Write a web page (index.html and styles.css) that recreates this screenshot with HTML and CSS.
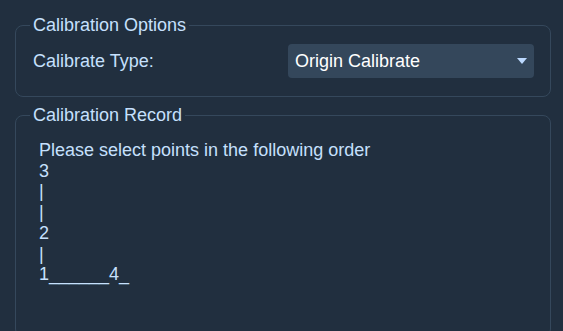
FILE: index.html
```html
<!DOCTYPE html>
<html>
<head>
<meta charset="utf-8">
<link rel="stylesheet" href="styles.css">
</head>
<body>
<div class="page">
  <fieldset class="group">
    <legend class="group-title">Calibration Options</legend>
    <div class="option-row">
      <span class="option-label">Calibrate Type:</span>
      <div class="select">
        <span class="select-value">Origin Calibrate</span>
        <svg class="select-arrow" width="10" height="6" viewBox="0 0 10 6"><polygon points="0,0 10,0 5,6" fill="#bcd9ff"/></svg>
      </div>
    </div>
  </fieldset>
  <fieldset class="group group-record">
    <legend class="group-title">Calibration Record</legend>
    <div class="record">
      <div>Please select points in the following order</div>
      <div>3</div>
      <div>|</div>
      <div>|</div>
      <div>2</div>
      <div>|</div>
      <div>1______4_</div>
    </div>
  </fieldset>
</div>
</body>
</html>
```
FILE: styles.css
```css
html, body {
  margin: 0;
  padding: 0;
  background: #212f3f;
}
body {
  font-family: "Liberation Sans", Arial, sans-serif;
  font-size: 18px;
  color: #c6e0fd;
  width: 563px;
  height: 331px;
  overflow: hidden;
}
.page {
  padding: 15px 12px 0 15px;
  display: flex;
  flex-direction: column;
  gap: 8px;
}
.group {
  margin: 0;
  border: 1px solid #35485c;
  border-radius: 8px;
  padding: 8px 16px 18px 17px;
  min-width: 0;
}
.group-title {
  padding: 0 3px;
  margin-left: -3px;
  line-height: 21px;
}
.option-row {
  display: grid;
  grid-template-columns: 255px 1fr;
  align-items: center;
}
.option-label {
  white-space: nowrap;
}
.select {
  height: 34px;
  background: #34475b;
  border-radius: 4px;
  display: flex;
  align-items: center;
  justify-content: space-between;
  padding: 0 7px 0 7px;
  color: #ffffff;
}
.select-arrow {
  display: block;
}
.group-record {
  min-height: 200px;
  padding: 14px 16px 16px 17px;
}
.record {
  line-height: 20.7px;
  padding-left: 6px;
}
```
